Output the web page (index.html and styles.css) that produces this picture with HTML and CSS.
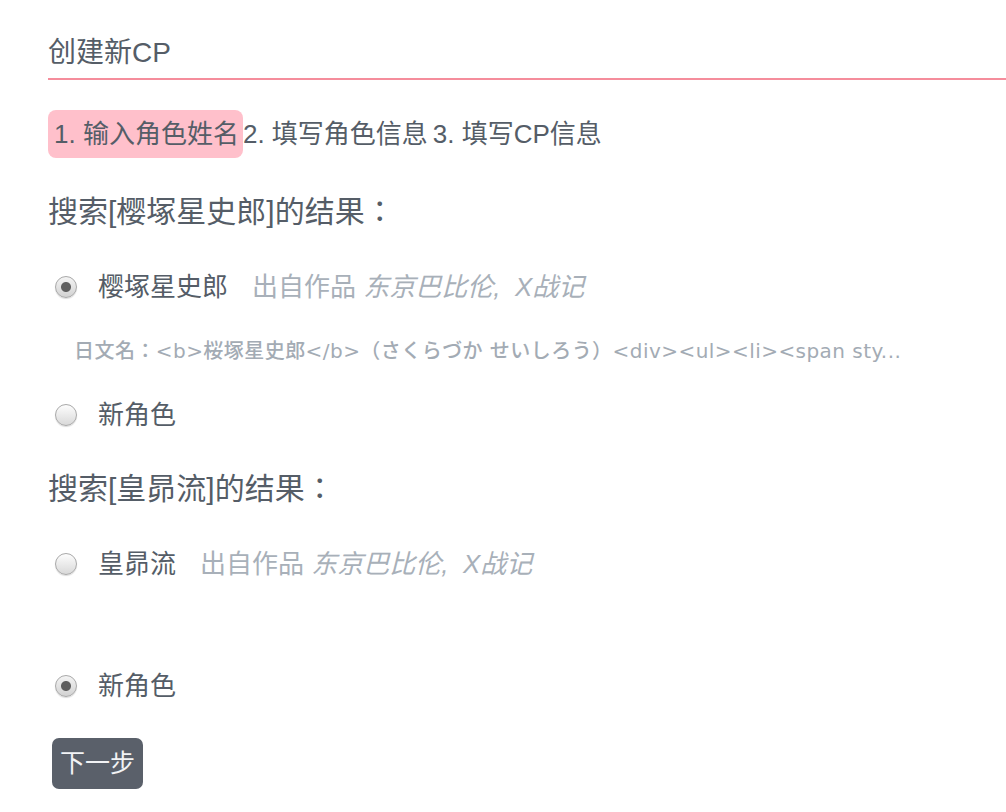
FILE: index.html
```html
<!DOCTYPE html>
<html lang="zh-CN">
<head>
<meta charset="utf-8">
<title>创建新CP</title>
<link rel="stylesheet" href="styles.css">
</head>
<body>
<div class="page">
  <h2 class="title">创建新CP</h2>
  <div class="steps">
    <span class="step active">1. 输入角色姓名</span><span class="step">2. 填写角色信息</span><span class="step">3. 填写CP信息</span>
  </div>

  <h3 class="search-title">搜索[樱塚星史郎]的结果<span class="colon">：</span></h3>
  <div class="results">
    <label class="option">
      <input class="radio" type="radio" name="c1" checked>
      <span class="name">樱塚星史郎</span>
      <span class="from">出自作品 <em>东京巴比伦,&nbsp; X战记</em></span>
    </label>
    <div class="detail" lang="ja">日文名：&lt;b&gt;桜塚星史郎&lt;/b&gt;（さくらづか せいしろう）&lt;div&gt;&lt;ul&gt;&lt;li&gt;&lt;span sty...</div>
    <label class="option">
      <input class="radio" type="radio" name="c1">
      <span class="name">新角色</span>
    </label>
  </div>

  <h3 class="search-title">搜索[皇昴流]的结果<span class="colon">：</span></h3>
  <div class="results">
    <label class="option">
      <input class="radio" type="radio" name="c2">
      <span class="name">皇昴流</span>
      <span class="from">出自作品 <em>东京巴比伦,&nbsp; X战记</em></span>
    </label>
    <div class="detail empty"></div>
    <label class="option">
      <input class="radio" type="radio" name="c2" checked>
      <span class="name">新角色</span>
    </label>
  </div>

  <button class="next" type="button">下一步</button>
</div>
</body>
</html>
```

FILE: styles.css
```css
html, body {
  margin: 0;
  padding: 0;
  background: #ffffff;
}

body {
  font-family: "Helvetica Neue", "Liberation Sans", "Noto Sans CJK SC", sans-serif;
  color: #555d67;
  text-spacing-trim: space-all;
}

.page {
  padding: 0 0 40px 48px;
}

.title {
  margin: 33px 0 0;
  font-size: 28px;
  font-weight: normal;
  line-height: 40px;
  padding-bottom: 5px;
  border-bottom: 2px solid #f58d9c;
}

.steps {
  display: flex;
  margin-top: 30px;
  font-size: 26px;
  line-height: 36px;
}

.step {
  padding: 6px 5px 6px 0;
  border-radius: 8px;
  white-space: nowrap;
}

.step.active {
  padding: 6px 4px 6px 6px;
  background: #ffc0cb;
}

.search-title {
  height: 40px;
  margin: 34px 0 0;
  font-size: 30px;
  font-weight: normal;
  line-height: 40px;
  white-space: nowrap;
}

.colon {
  display: inline-block;
  width: 30px;
  font-family: "Noto Sans CJK TC", sans-serif;
  line-height: 0;
  text-align: center;
}

.results {
  display: flex;
  flex-direction: column;
  gap: 30px;
  margin-top: 35px;
}

.option {
  display: flex;
  align-items: center;
  height: 40px;
  font-size: 26px;
  line-height: 40px;
}

.radio {
  appearance: none;
  -webkit-appearance: none;
  box-sizing: border-box;
  width: 22px;
  height: 22px;
  margin: 0 21px 0 7px;
  border-radius: 50%;
  border: 1px solid #a9a9a9;
  background: linear-gradient(#fdfdfd, #d9d9d9);
  box-shadow: 0 1px 1px rgba(0, 0, 0, 0.14);
  flex: none;
}

.radio:checked {
  background:
    radial-gradient(circle, #5f5f5f 0, #5f5f5f 4.5px, rgba(95, 95, 95, 0) 5.5px),
    linear-gradient(#f4f4f4, #d2d2d2);
}

.from {
  margin-left: 24px;
  color: #a8b0b9;
}

.from em {
  font-style: italic;
}

.detail {
  height: 28px;
  padding-left: 26px;
  font-family: "DejaVu Sans", "Noto Sans CJK JP", sans-serif;
  font-size: 20px;
  font-weight: 500;
  letter-spacing: 0.45px;
  line-height: 28px;
  color: #a3abb4;
  white-space: nowrap;
}

.detail.empty {
  height: 22px;
}

.next {
  display: block;
  margin: 32px 0 0 4px;
  padding: 7px 8px 8px 8px;
  border: none;
  border-radius: 7px;
  background: #5a606a;
  color: #f2f3f5;
  font-family: "Helvetica Neue", "Liberation Sans", "Noto Sans CJK SC", sans-serif;
  font-size: 25px;
  line-height: 36px;
}
```
